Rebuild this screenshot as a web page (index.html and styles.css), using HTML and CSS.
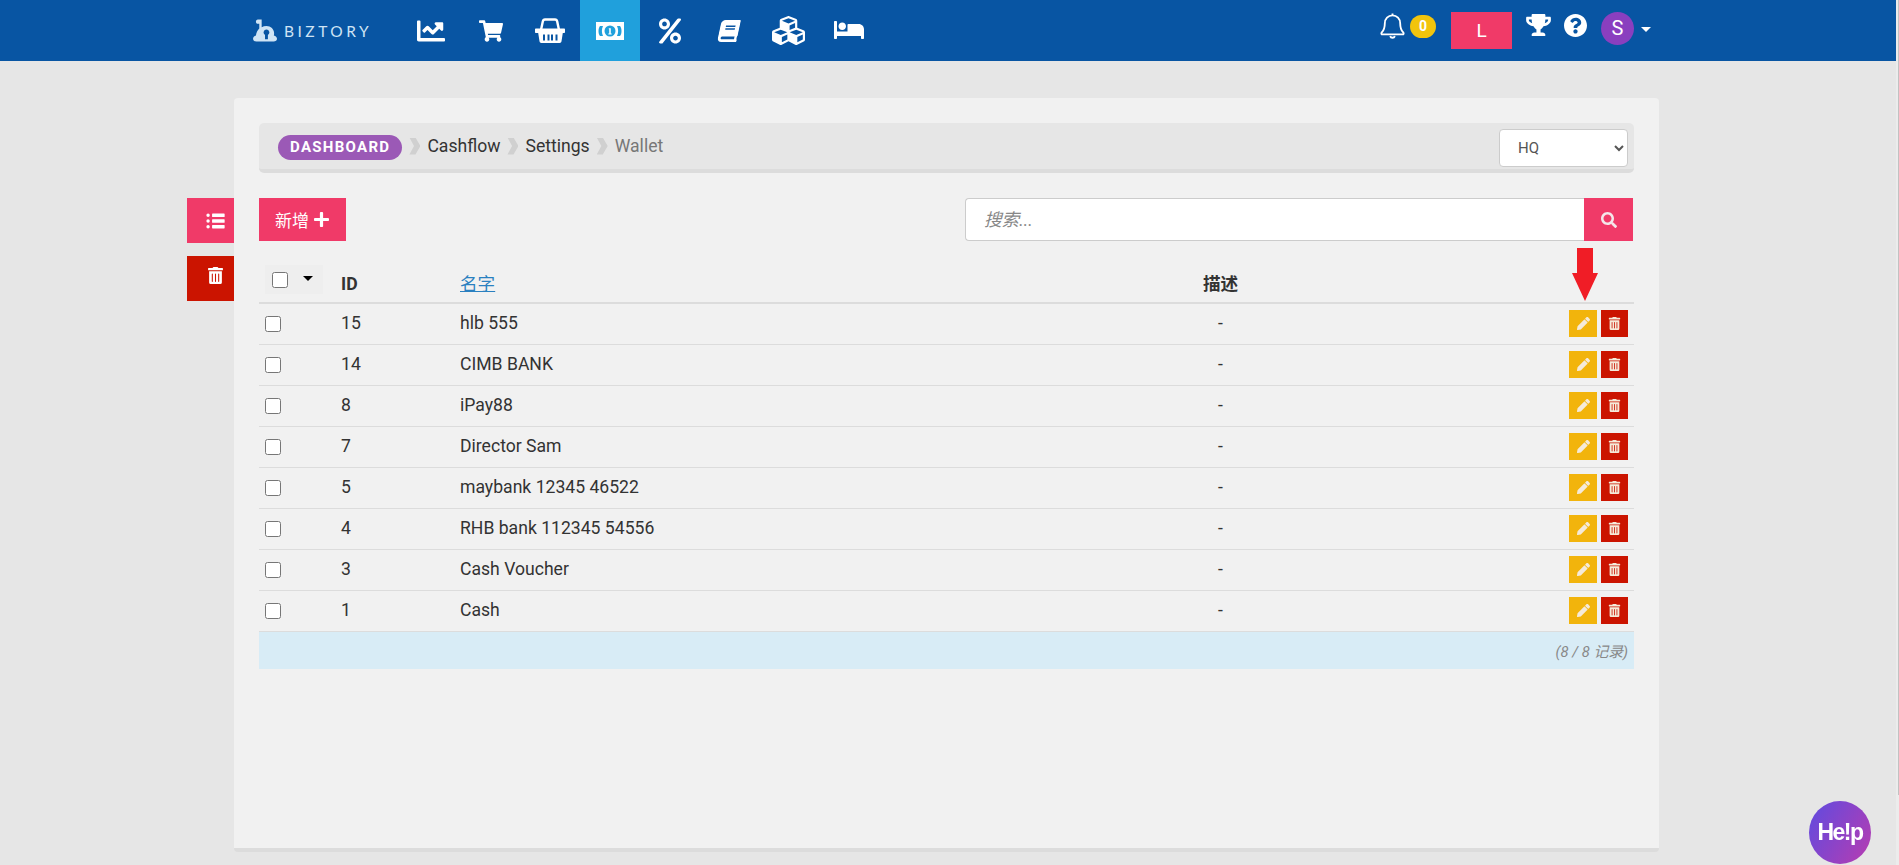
FILE: index.html
```html
<!DOCTYPE html>
<html lang="zh">
<head>
<meta charset="utf-8">
<title>Wallet</title>
<link rel="stylesheet" href="styles.css">
</head>
<body>
<svg class="defs" width="0" height="0" aria-hidden="true">
  <symbol id="i-pencil" viewBox="0 0 512 512"><path d="M497.9 142.1l-46.1 46.1c-4.7 4.7-12.3 4.7-17 0l-111-111c-4.7-4.7-4.7-12.3 0-17l46.1-46.1c18.7-18.7 49.1-18.7 67.9 0l60.1 60.1c18.8 18.7 18.8 49.1 0 67.9zM284.2 99.8L21.6 362.4.4 483.9c-2.9 16.4 11.4 30.6 27.8 27.8l121.5-21.3 262.6-262.6c4.7-4.7 4.7-12.3 0-17l-111-111c-4.8-4.7-12.4-4.7-17.1 0z"/></symbol>
  <symbol id="i-trash" viewBox="0 0 448 512"><path d="M32 464a48 48 0 0 0 48 48h288a48 48 0 0 0 48-48V128H32zm272-256a16 16 0 0 1 32 0v224a16 16 0 0 1-32 0zm-96 0a16 16 0 0 1 32 0v224a16 16 0 0 1-32 0zm-96 0a16 16 0 0 1 32 0v224a16 16 0 0 1-32 0zM432 32H312l-9.4-18.7A24 24 0 0 0 281.1 0H166.8a23.72 23.72 0 0 0-21.4 13.3L136 32H16A16 16 0 0 0 0 48v32a16 16 0 0 0 16 16h416a16 16 0 0 0 16-16V48a16 16 0 0 0-16-16z"/></symbol>
</svg>

<header class="topbar">
  <a class="logo" href="#">
    <svg class="logo-mark" viewBox="0 0 26 24"><path fill-rule="evenodd" d="M5 .5h4V8.500c1.500-.8 3.200-1.200 5-1.200 4.500 0 8 3.300 8 7.700 0 .8-.1 1.500-.3 2.200 2 .5 3.300 2 3.300 3.500 0 1.800-1.500 2.800-3.500 2.800H3.500C1.500 23.500 0 22.500 0 20.700c0-1.500 1.200-2.800 3-3.400 .4-3.500 2-6 3.500-7.300V5H5C3.800 5 3 4 3 2.800S3.800.5 5 .5zM14 11a3 3 0 0 0-1.500 5.600V21h3v-4.400A3 3 0 0 0 14 11z"/></svg>
    <span class="logo-text">BIZTORY</span>
  </a>
  <nav class="mainnav">
    <a class="navitem" href="#"><svg class="ico w30" viewBox="0 0 512 512"><path d="M496 384H64V80c0-8.840-7.160-16-16-16H16C7.160 64 0 71.160 0 80v336c0 17.670 14.330 32 32 32h464c8.840 0 16-7.160 16-16v-32c0-8.840-7.160-16-16-16zM464 96H345.940c-21.380 0-32.090 25.850-16.970 40.970l32.400 32.400L288 242.750l-73.370-73.370c-12.500-12.500-32.760-12.500-45.250 0l-68.690 68.690c-6.250 6.250-6.250 16.380 0 22.630l22.620 22.620c6.250 6.250 16.380 6.250 22.630 0L192 237.250l73.370 73.370c12.500 12.500 32.760 12.500 45.250 0l96-96 32.400 32.400c15.120 15.120 40.970 4.410 40.970-16.970V112c.01-8.840-7.150-16-15.990-16z"/></svg></a>
    <a class="navitem" href="#"><svg class="ico w24" viewBox="0 0 576 512"><path d="M528.120 301.319l47.273-208C578.806 78.301 567.391 64 551.990 64H159.208l-9.166-44.810C147.758 8.021 137.930 0 126.529 0H24C10.745 0 0 10.745 0 24v16c0 13.255 10.745 24 24 24h69.883l70.248 343.435C147.325 417.100 136 435.222 136 456c0 30.928 25.072 56 56 56s56-25.072 56-56c0-15.674-6.447-29.835-16.824-40h209.647C430.447 426.165 424 440.326 424 456c0 30.928 25.072 56 56 56s56-25.072 56-56c0-22.172-12.888-41.332-31.579-50.405l5.517-24.276c3.413-15.018-8.002-29.319-23.403-29.319H218.117l-6.545-32h293.145c11.206 0 20.920-7.754 23.403-18.681z"/></svg></a>
    <a class="navitem" href="#"><svg class="ico basket" viewBox="0 0 30 25"><path class="handle" d="M6 12L7.800 3.500Q8.200 1.500 10 1.500H20Q21.800 1.500 22.200 3.500L24 12"/><path fill-rule="evenodd" d="M1 10.500h28c.6 0 1 .4 1 1V14c0 .6-.4 1-1 1h-1.200l-1.300 8.300c-.2 1-.8 1.700-1.800 1.700H6.300c-1 0-1.600-.7-1.800-1.700L3.200 15H1c-.6 0-1-.4-1-1v-2.500c0-.6.400-1 1-1zM8 16.500v6h2v-6zm4.500 0v6h2v-6zm3.500 0v6h2v-6zm4.500 0v6h2v-6z"/></svg></a>
    <a class="navitem active" href="#"><svg class="ico money" viewBox="0 0 28 18"><rect width="28" height="18"/><path class="cut" d="M4 4h3c-1.500 3-1.500 7 0 10H4c-1-1-1.500-3-1.500-5s.5-4 1.500-5zM24 4h-3c1.500 3 1.500 7 0 10h3c1-1 1.500-3 1.500-5s-.5-4-1.500-5z"/><circle class="cut" cx="14" cy="9" r="5.500"/><path class="one" d="M12.800 6.300h2v5.200h.9v1h-3.400v-1h.9V7.300h-.4z"/></svg></a>
    <a class="navitem" href="#"><svg class="ico w22" viewBox="0 0 448 512"><path d="M112 224c61.900 0 112-50.100 112-112S173.900 0 112 0 0 50.100 0 112s50.100 112 112 112zm0-160c26.500 0 48 21.500 48 48s-21.500 48-48 48-48-21.500-48-48 21.500-48 48-48zm224 224c-61.900 0-112 50.100-112 112s50.100 112 112 112 112-50.100 112-112-50.100-112-112-112zm0 160c-26.500 0-48-21.500-48-48s21.500-48 48-48 48 21.500 48 48-21.500 48-48 48zM392.300.2l31.600.1c19.400.1 30.900 21.800 20 37.800L77.400 501.600a23.950 23.950 0 0 1-20 10.400l-32.400-.1c-19.400-.1-30.900-21.800-20-37.800L372.300 10.600c4.500-6.500 12-10.400 20-10.400z"/></svg></a>
    <a class="navitem" href="#"><svg class="ico book" viewBox="0 0 448 512"><path d="M448 360V24c0-13.300-10.700-24-24-24H96C43 0 0 43 0 96v320c0 53 43 96 96 96h328c13.300 0 24-10.700 24-24v-16c0-7.500-3.500-14.300-8.900-18.700-4.200-15.400-4.200-59.300 0-74.700 5.400-4.300 8.900-11.100 8.900-18.600zM128 134c0-3.300 2.700-6 6-6h212c3.300 0 6 2.700 6 6v20c0 3.300-2.700 6-6 6H134c-3.300 0-6-2.700-6-6v-20zm0 64c0-3.300 2.700-6 6-6h212c3.300 0 6 2.700 6 6v20c0 3.300-2.700 6-6 6H134c-3.300 0-6-2.700-6-6v-20zm253.400 250H96c-17.700 0-32-14.300-32-32 0-17.600 14.400-32 32-32h285.400c-1.900 17.100-1.900 46.900 0 64z"/></svg></a>
    <a class="navitem" href="#"><svg class="ico cubes" viewBox="0 0 512 512"><path d="M488.600 250.200L392 214V105.500c0-15-9.300-28.400-23.400-33.700l-100-37.500c-8.100-3.100-17.100-3.100-25.300 0l-100 37.500c-14.100 5.300-23.400 18.700-23.400 33.700V214l-96.600 36.200C9.300 255.500 0 268.900 0 283.900V394c0 13.600 7.700 26.100 19.900 32.200l100 50c10.100 5.100 22.100 5.100 32.200 0l103.900-52 103.900 52c10.100 5.100 22.100 5.100 32.200 0l100-50c12.200-6.100 19.900-18.600 19.900-32.200V283.900c0-15-9.300-28.400-23.400-33.700zM358 214.800l-85 31.900v-68.200l85-37v73.300zM154 104.100l102-38.200 102 38.200v.6l-102 41.400-102-41.400v-.6zm84 291.100l-85 42.500v-79.100l85-38.800v75.400zm0-112l-102 41.400-102-41.400v-.6l102-38.200 102 38.200v.6zm240 112l-85 42.500v-79.100l85-38.800v75.400zm0-112l-102 41.400-102-41.400v-.6l102-38.200 102 38.200v.6z"/></svg></a>
    <a class="navitem" href="#"><svg class="ico bed" viewBox="0 0 640 512"><path d="M176 256c44.110 0 80-35.890 80-80s-35.890-80-80-80-80 35.890-80 80 35.890 80 80 80zm352-128H304c-8.840 0-16 7.160-16 16v144H64V80c0-8.840-7.160-16-16-16H16C7.160 64 0 71.160 0 80v352c0 8.840 7.160 16 16 16h32c8.840 0 16-7.160 16-16v-48h512v48c0 8.840 7.160 16 16 16h32c8.840 0 16-7.160 16-16V240c0-61.860-50.140-112-112-112z"/></svg></a>
  </nav>
  <div class="userbar">
    <svg class="bell" viewBox="0 0 26 28"><path d="M13 3.500c-4.600 0-8 3.600-8 8.300 0 6.300-2 8.200-3.300 9.600-.7.800-.2 1.900.8 1.900h21c1 0 1.500-1.100.8-1.900C23 20 21 18.100 21 11.800c0-4.700-3.400-8.300-8-8.300zM13 3.500V1.500M10.500 25c.4 1 1.400 1.700 2.500 1.700s2.100-.7 2.500-1.700"/></svg>
    <span class="count">0</span>
    <a class="loc" href="#">L</a>
    <svg class="trophy" viewBox="0 0 576 512"><path d="M552 64H448V24c0-13.300-10.700-24-24-24H152c-13.300 0-24 10.700-24 24v40H24C10.700 64 0 74.700 0 88v56c0 35.700 22.500 72.400 61.900 100.700 31.500 22.700 69.800 37.100 110 41.700C203.300 338.500 240 360 240 360v72h-48c-35.300 0-64 20.700-64 56v12c0 6.600 5.400 12 12 12h296c6.600 0 12-5.400 12-12v-12c0-35.300-28.700-56-64-56h-48v-72s36.700-21.500 68.100-73.600c40.300-4.600 78.700-19 110-41.700 39.300-28.300 61.900-65 61.900-100.700V88c0-13.300-10.700-24-24-24zM99.300 192.800C74.900 175.200 64 155.600 64 144v-16h64.200c1 32.600 5.800 61.200 12.800 86.200-15.100-5.200-29.200-12.400-41.700-21.400zM512 144c0 16.100-17.700 36.100-35.300 48.800-12.500 9-26.700 16.200-41.800 21.400 7-25 11.800-53.600 12.800-86.200H512v16z"/></svg>
    <svg class="help-ico" viewBox="8 8 496 496"><path d="M504 256c0 136.997-111.043 248-248 248S8 392.997 8 256C8 119.083 119.043 8 256 8s248 111.083 248 248zM262.655 90c-54.497 0-89.255 22.957-116.549 63.758-3.536 5.286-2.353 12.415 2.715 16.258l34.699 26.310c5.205 3.947 12.621 3.008 16.665-2.122 17.864-22.658 30.113-35.797 57.303-35.797 20.429 0 45.698 13.148 45.698 32.958 0 14.976-12.363 22.667-32.534 33.976C247.128 238.528 216 254.941 216 296v4c0 6.627 5.373 12 12 12h56c6.627 0 12-5.373 12-12v-1.333c0-28.462 83.186-29.647 83.186-106.667 0-58.002-60.165-102-116.531-102zM256 338c-25.365 0-46 20.635-46 46 0 25.364 20.635 46 46 46s46-20.636 46-46c0-25.365-20.635-46-46-46z"/></svg>
    <span class="avatar">S</span>
    <span class="caret"></span>
  </div>
</header>

<div class="page">
  <aside class="sidetools">
    <button class="sidebtn pink" type="button"><svg class="list-ico" viewBox="0 32 512 448"><path d="M48 48a48 48 0 1 0 48 48 48 48 0 0 0-48-48zm0 160a48 48 0 1 0 48 48 48 48 0 0 0-48-48zm0 160a48 48 0 1 0 48 48 48 48 0 0 0-48-48zm448 0H176a16 16 0 0 0-16 16v64a16 16 0 0 0 16 16h320a16 16 0 0 0 16-16v-64a16 16 0 0 0-16-16zm0-320H176a16 16 0 0 0-16 16v64a16 16 0 0 0 16 16h320a16 16 0 0 0 16-16V64a16 16 0 0 0-16-16zm0 160H176a16 16 0 0 0-16 16v64a16 16 0 0 0 16 16h320a16 16 0 0 0 16-16v-64a16 16 0 0 0-16-16z"/></svg></button>
    <button class="sidebtn red" type="button"><svg class="side-trash"><use href="#i-trash"/></svg></button>
  </aside>

  <main class="card">
    <div class="crumbbar">
      <a class="pill" href="#">DASHBOARD</a>
      <span class="sep"></span><a class="crumb" href="#">Cashflow</a>
      <span class="sep"></span><a class="crumb" href="#">Settings</a>
      <span class="sep"></span><span class="crumb current">Wallet</span>
      <select class="branch"><option>HQ</option></select>
    </div>

    <div class="toolbar">
      <button class="addbtn" type="button">新增<svg class="plus" viewBox="0 32 448 448"><path d="M416 208H272V64c0-17.670-14.330-32-32-32h-32c-17.670 0-32 14.330-32 32v144H32c-17.670 0-32 14.330-32 32v32c0 17.670 14.330 32 32 32h144v144c0 17.670 14.330 32 32 32h32c17.670 0 32-14.330 32-32V304h144c17.670 0 32-14.330 32-32v-32c0-17.670-14.330-32-32-32z"/></svg></button>
      <form class="search">
        <input class="search-input" type="text" placeholder="搜索...">
        <button class="search-btn" type="button"><svg viewBox="0 0 512 512"><path d="M505 442.700L405.300 343c-4.500-4.500-10.600-7-17-7H372c27.600-35.300 44-79.700 44-128C416 93.100 322.900 0 208 0S0 93.100 0 208s93.100 208 208 208c48.300 0 92.700-16.400 128-44v16.300c0 6.400 2.500 12.500 7 17l99.700 99.700c9.400 9.400 24.600 9.400 33.900 0l28.300-28.300c9.400-9.400 9.400-24.600.1-34zM208 336c-70.700 0-128-57.200-128-128 0-70.700 57.200-128 128-128 70.700 0 128 57.200 128 128 0 70.700-57.200 128-128 128z"/></svg></button>
      </form>
    </div>

    <div class="tablewrap">
      <svg class="redarrow" viewBox="0 0 26 53"><path d="M5 0h16v25h5L13 53 0 25h5z"/></svg>
      <table class="grid">
        <colgroup><col class="c-check"><col class="c-id"><col class="c-name"><col class="c-desc"><col class="c-act"></colgroup>
        <thead>
          <tr>
            <th><span class="checkall"><input type="checkbox"><i class="minicaret"></i></span></th>
            <th>ID</th>
            <th><a class="sortlink" href="#">名字</a></th>
            <th class="center">描述</th>
            <th></th>
          </tr>
        </thead>
        <tbody>
          <tr><td><input type="checkbox"></td><td>15</td><td>hlb 555</td><td class="center">-</td><td class="actions"><a class="act edit" href="#"><svg><use href="#i-pencil"/></svg></a><a class="act del" href="#"><svg><use href="#i-trash"/></svg></a></td></tr>
          <tr><td><input type="checkbox"></td><td>14</td><td>CIMB BANK</td><td class="center">-</td><td class="actions"><a class="act edit" href="#"><svg><use href="#i-pencil"/></svg></a><a class="act del" href="#"><svg><use href="#i-trash"/></svg></a></td></tr>
          <tr><td><input type="checkbox"></td><td>8</td><td>iPay88</td><td class="center">-</td><td class="actions"><a class="act edit" href="#"><svg><use href="#i-pencil"/></svg></a><a class="act del" href="#"><svg><use href="#i-trash"/></svg></a></td></tr>
          <tr><td><input type="checkbox"></td><td>7</td><td>Director Sam</td><td class="center">-</td><td class="actions"><a class="act edit" href="#"><svg><use href="#i-pencil"/></svg></a><a class="act del" href="#"><svg><use href="#i-trash"/></svg></a></td></tr>
          <tr><td><input type="checkbox"></td><td>5</td><td>maybank 12345 46522</td><td class="center">-</td><td class="actions"><a class="act edit" href="#"><svg><use href="#i-pencil"/></svg></a><a class="act del" href="#"><svg><use href="#i-trash"/></svg></a></td></tr>
          <tr><td><input type="checkbox"></td><td>4</td><td>RHB bank 112345 54556</td><td class="center">-</td><td class="actions"><a class="act edit" href="#"><svg><use href="#i-pencil"/></svg></a><a class="act del" href="#"><svg><use href="#i-trash"/></svg></a></td></tr>
          <tr><td><input type="checkbox"></td><td>3</td><td>Cash Voucher</td><td class="center">-</td><td class="actions"><a class="act edit" href="#"><svg><use href="#i-pencil"/></svg></a><a class="act del" href="#"><svg><use href="#i-trash"/></svg></a></td></tr>
          <tr><td><input type="checkbox"></td><td>1</td><td>Cash</td><td class="center">-</td><td class="actions"><a class="act edit" href="#"><svg><use href="#i-pencil"/></svg></a><a class="act del" href="#"><svg><use href="#i-trash"/></svg></a></td></tr>
        </tbody>
      </table>
      <div class="tablefoot">(8 / 8 记录)</div>
    </div>
  </main>
</div>

<a class="helpfab" href="#">He!p</a>
<div class="scrollstrip"><span class="scrollthumb"></span></div>
</body>
</html>
```

FILE: styles.css
```css
* { box-sizing: border-box; }
html, body { height: 100%; }
body {
  margin: 0;
  background: #e6e6e6;
  color: #333;
  font: 17.600px/1.4 Roboto, "Noto Sans CJK SC", sans-serif;
  overflow: hidden;
}
a { color: inherit; text-decoration: none; }
.defs { position: absolute; }

/* top bar */
.topbar {
  display: flex;
  align-items: stretch;
  height: 61px;
  padding: 0 248px;
  background: #0855a3;
  color: #fff;
}
.logo {
  display: flex;
  align-items: center;
  gap: 6px;
  width: 153px;
  padding-left: 5px;
  color: #cfe4f5;
}
.logo-mark { width: 25px; height: 23px; fill: #cfe4f5; }
.logo-text {
  font: 400 15.500px Lato, sans-serif;
  letter-spacing: 3.500px;
}
.mainnav { display: flex; }
.navitem {
  display: flex;
  align-items: center;
  justify-content: center;
  width: 59.700px;
}
.navitem.active { background: #20a0dc; }
.ico { display: block; fill: #fff; }
.w30 { width: 30px; height: 28px; }
.w24 { width: 24px; height: 26px; }
.w22 { width: 22px; height: 28px; }
.basket { width: 30px; height: 27px; }
.money { width: 28px; height: 18px; }
.book { width: 20px; height: 22px; transform: skewX(-12deg); }
.cubes { width: 33px; height: 33px; }
.bed { width: 30px; height: 26px; margin-bottom: 2px; }
.handle { fill: none; stroke: #fff; stroke-width: 2.400; }
.cut { fill: #20a0dc; }
.one { fill: #fff; }

.userbar {
  display: flex;
  align-items: flex-start;
  margin-left: auto;
  padding-top: 12px;
}
.bell {
  width: 25px;
  height: 27px;
  margin-right: 5px;
  fill: none;
  stroke: #fff;
  stroke-width: 1.900;
}
.count {
  width: 26px;
  height: 23px;
  margin: 3px 15px 0 0;
  border-radius: 12px;
  background: #f2c40c;
  font-size: 14px;
  font-weight: 700;
  line-height: 23px;
  text-align: center;
}
.loc {
  width: 61px;
  height: 37px;
  margin-right: 14px;
  background: #f03a68;
  font-size: 19px;
  line-height: 37px;
  text-align: center;
}
.trophy { width: 25px; height: 22px; margin: 2px 13px 0 0; fill: #fff; }
.help-ico { width: 23px; height: 23px; margin: 2px 14px 0 0; fill: #fff; }
.avatar {
  width: 33px;
  height: 33px;
  margin-right: 7px;
  border-radius: 50%;
  background: #8a3fbf;
  font-size: 20px;
  line-height: 33px;
  text-align: center;
}
.caret {
  margin-top: 15px;
  border: 5px solid transparent;
  border-top-color: #fff;
  border-bottom: 0;
}

/* page */
.page {
  display: flex;
  align-items: flex-start;
  padding: 37px 0 0 187px;
}
.sidetools {
  display: flex;
  flex-direction: column;
  gap: 13px;
  width: 47px;
  margin-top: 100px;
}
.sidebtn {
  display: flex;
  align-items: center;
  justify-content: center;
  height: 45px;
  padding: 0 0 0 9px;
  border: 0;
}
.sidebtn.pink { background: #f03a68; }
.sidebtn.red { background: #cb1400; }
.list-ico { width: 19px; height: 16px; fill: #fff; }
.side-trash { width: 15px; height: 17px; fill: #fff; margin-top: -6px; }

.card {
  width: 1425px;
  height: 754px;
  padding: 25px;
  border-bottom: 4px solid #dcdcdc;
  border-radius: 4px;
  background: #f1f1f1;
}
.crumbbar {
  display: flex;
  align-items: center;
  height: 50px;
  padding: 3px 6px 0 19px;
  border-bottom: 4px solid #dcdcdc;
  border-radius: 5px;
  background: #e6e6e6;
}
.pill {
  height: 25px;
  padding: 0 12px;
  border-radius: 13px;
  background: #9b59b6;
  color: #fff;
  font-size: 15px;
  font-weight: 700;
  letter-spacing: 1.300px;
  line-height: 25px;
}
.sep {
  width: 11px;
  height: 17px;
  margin: 0 7px 3px;
  background: #d0d0d0;
  clip-path: polygon(0 0, 55% 0, 100% 50%, 55% 100%, 0 100%, 42% 50%);
}
.crumb { margin-bottom: 3px; font-size: 17.600px; color: #333; }
.crumb.current { color: #777; }
.branch {
  width: 129px;
  height: 38px;
  margin-left: auto;
  padding-left: 14px;
  border: 1px solid #ccc;
  border-radius: 4px;
  background-color: #fff;
  color: #555;
  font: 15px Roboto, sans-serif;
}

.toolbar {
  display: flex;
  justify-content: space-between;
  margin-top: 25px;
}
.addbtn {
  display: flex;
  align-items: center;
  gap: 5px;
  width: 87px;
  height: 43px;
  padding: 0 16px;
  border: 0;
  background: #f03a68;
  color: #fff;
  font: 17px "Noto Sans CJK SC", sans-serif;
}
.plus { width: 15px; height: 15px; fill: #fff; }
.search { display: flex; width: 668px; margin-right: 1px; }
.search-input {
  flex: 1;
  height: 43px;
  padding: 0 18px;
  border: 1px solid #ccc;
  border-right: 0;
  border-radius: 4px 0 0 4px;
  background: #fff;
  font: italic 17.600px Roboto, "Noto Sans CJK SC", sans-serif;
}
.search-input::placeholder { color: #888; }
.search-btn {
  display: flex;
  align-items: center;
  justify-content: center;
  width: 49px;
  height: 43px;
  padding: 0;
  border: 0;
  background: #f03a68;
}
.search-btn svg { width: 16px; height: 16px; fill: #f4e6ea; }

.tablewrap { position: relative; margin-top: 20px; }
.redarrow {
  position: absolute;
  top: -13px;
  left: 1313px;
  z-index: 2;
  width: 26px;
  height: 53px;
  fill: #f01d26;
}
.grid {
  width: 100%;
  table-layout: fixed;
  border-collapse: collapse;
}
.c-check { width: 71px; }
.c-id { width: 119px; }
.c-name { width: 550px; }
.c-desc { width: 443px; }
.c-act { width: 192px; }
.grid th {
  height: 42px;
  padding: 6px 11px 0;
  border-bottom: 2px solid #dcdcdc;
  font-weight: 700;
  text-align: left;
}
.grid td {
  height: 41px;
  padding: 0 11px;
  border-bottom: 1px solid #dcdcdc;
}
.grid td:first-child { padding-left: 6px; }
.grid th:first-child { padding: 0 0 0 6px; }
.grid th.center, .grid td.center { text-align: center; }
.grid input[type="checkbox"] {
  display: block;
  width: 16px;
  height: 16px;
  margin: 0;
  appearance: auto;
}
.checkall {
  display: flex;
  align-items: center;
  gap: 15px;
  width: 58px;
  height: 29px;
  margin-top: -4px;
  padding-left: 7px;
  background: #eeeeee;
}
.minicaret {
  border: 5px solid transparent;
  border-top-color: #000;
  border-bottom: 0;
  margin-top: -3px;
}
.sortlink { color: #2a80c0; text-decoration: underline; font-weight: 400; }
.grid td.actions {
  padding: 0 6px 0 0;
  font-size: 0;
  text-align: right;
}
.act {
  display: inline-flex;
  align-items: center;
  justify-content: center;
  width: 28px;
  height: 27px;
  vertical-align: middle;
}
.act svg { width: 13px; height: 13px; fill: #f5ead9; }
.edit { background: #f2b40c; }
.del { width: 27px; margin-left: 4px; background: #cb1400; }
.tablefoot {
  height: 37px;
  padding: 10px 6px 0 0;
  background: #d8ecf6;
  color: #888;
  font-size: 14.800px;
  font-style: italic;
  text-align: right;
}

.helpfab {
  position: fixed;
  right: 28px;
  bottom: 1px;
  width: 62px;
  height: 63px;
  border-radius: 50%;
  background: linear-gradient(120deg, #5f4be0, #b83cb0);
  color: #fff;
  font: 700 23px/63px "Liberation Sans", sans-serif;
  letter-spacing: -1.500px;
  text-align: center;
}
.scrollstrip {
  position: fixed;
  top: 0;
  right: 0;
  bottom: 0;
  width: 3px;
  background: #ececec;
}
.scrollthumb {
  display: block;
  width: 1px;
  height: 795px;
  margin-left: 2px;
  background: #c2c2c2;
}
```
